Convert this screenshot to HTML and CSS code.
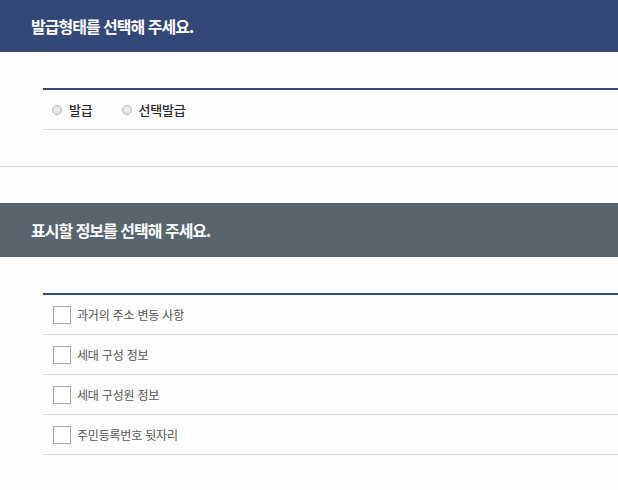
FILE: index.html
```html
<!DOCTYPE html>
<html lang="ko">
<head>
<meta charset="utf-8">
<link rel="stylesheet" href="styles.css">
</head>
<body>
<div class="page">
  <h2 class="title title-navy">발급형태를 선택해 주세요.</h2>
  <div class="panel">
    <div class="row radio-row">
      <label class="radio"><span class="radio-dot"></span><span class="radio-text">발급</span></label>
      <label class="radio"><span class="radio-dot"></span><span class="radio-text">선택발급</span></label>
    </div>
  </div>
  <hr class="divider">
  <h2 class="title title-gray">표시할 정보를 선택해 주세요.</h2>
  <div class="panel">
    <div class="row"><span class="check"></span><span class="check-text">과거의 주소 변동 사항</span></div>
    <div class="row"><span class="check"></span><span class="check-text">세대 구성 정보</span></div>
    <div class="row"><span class="check"></span><span class="check-text">세대 구성원 정보</span></div>
    <div class="row"><span class="check"></span><span class="check-text">주민등록번호 뒷자리</span></div>
  </div>
</div>
</body>
</html>
```
FILE: styles.css
```css
* { box-sizing: border-box; }
html, body { margin: 0; padding: 0; background: #fdfdfd; }
body {
  font-family: "Noto Sans CJK KR", "Noto Sans", sans-serif;
  width: 618px;
  overflow: hidden;
}
.title {
  margin: 0;
  display: flex;
  align-items: center;
  padding-left: 31px;
  color: #fff;
  font-size: 16px;
  font-weight: 700;
  letter-spacing: -1px;
}
.title-navy { background: #344878; height: 52px; }
.title-gray { background: #59656e; height: 54px; }
.panel {
  margin: 36px 0 0 43px;
  border-top: 2px solid #34497a;
}
.row {
  display: flex;
  align-items: center;
  height: 40px;
  border-bottom: 1px solid #d9d9d9;
  padding-left: 10px;
}
.radio-row { padding-left: 9px; }
.radio {
  display: flex;
  align-items: center;
  margin-right: 29px;
}
.radio-dot {
  width: 10px;
  height: 10px;
  border-radius: 50%;
  border: 1px solid #b5b5b5;
  background: radial-gradient(circle at 50% 40%, #f2f2f2 0%, #d7d7d7 100%);
  margin-right: 7px;
}
.radio-text {
  font-size: 13px;
  font-weight: 500;
  color: #2a2a2a;
  letter-spacing: -0.2px;
}
.divider {
  margin: 36px 0 36px 0;
  border: 0;
  border-top: 1px solid #d9d9d9;
  height: 0;
}
.check {
  width: 18px;
  height: 18px;
  border: 1px solid #a6a6a6;
  background: #fff;
  margin-right: 6px;
}
.check-text {
  font-size: 12px;
  color: #555;
  letter-spacing: -0.2px;
}
```
